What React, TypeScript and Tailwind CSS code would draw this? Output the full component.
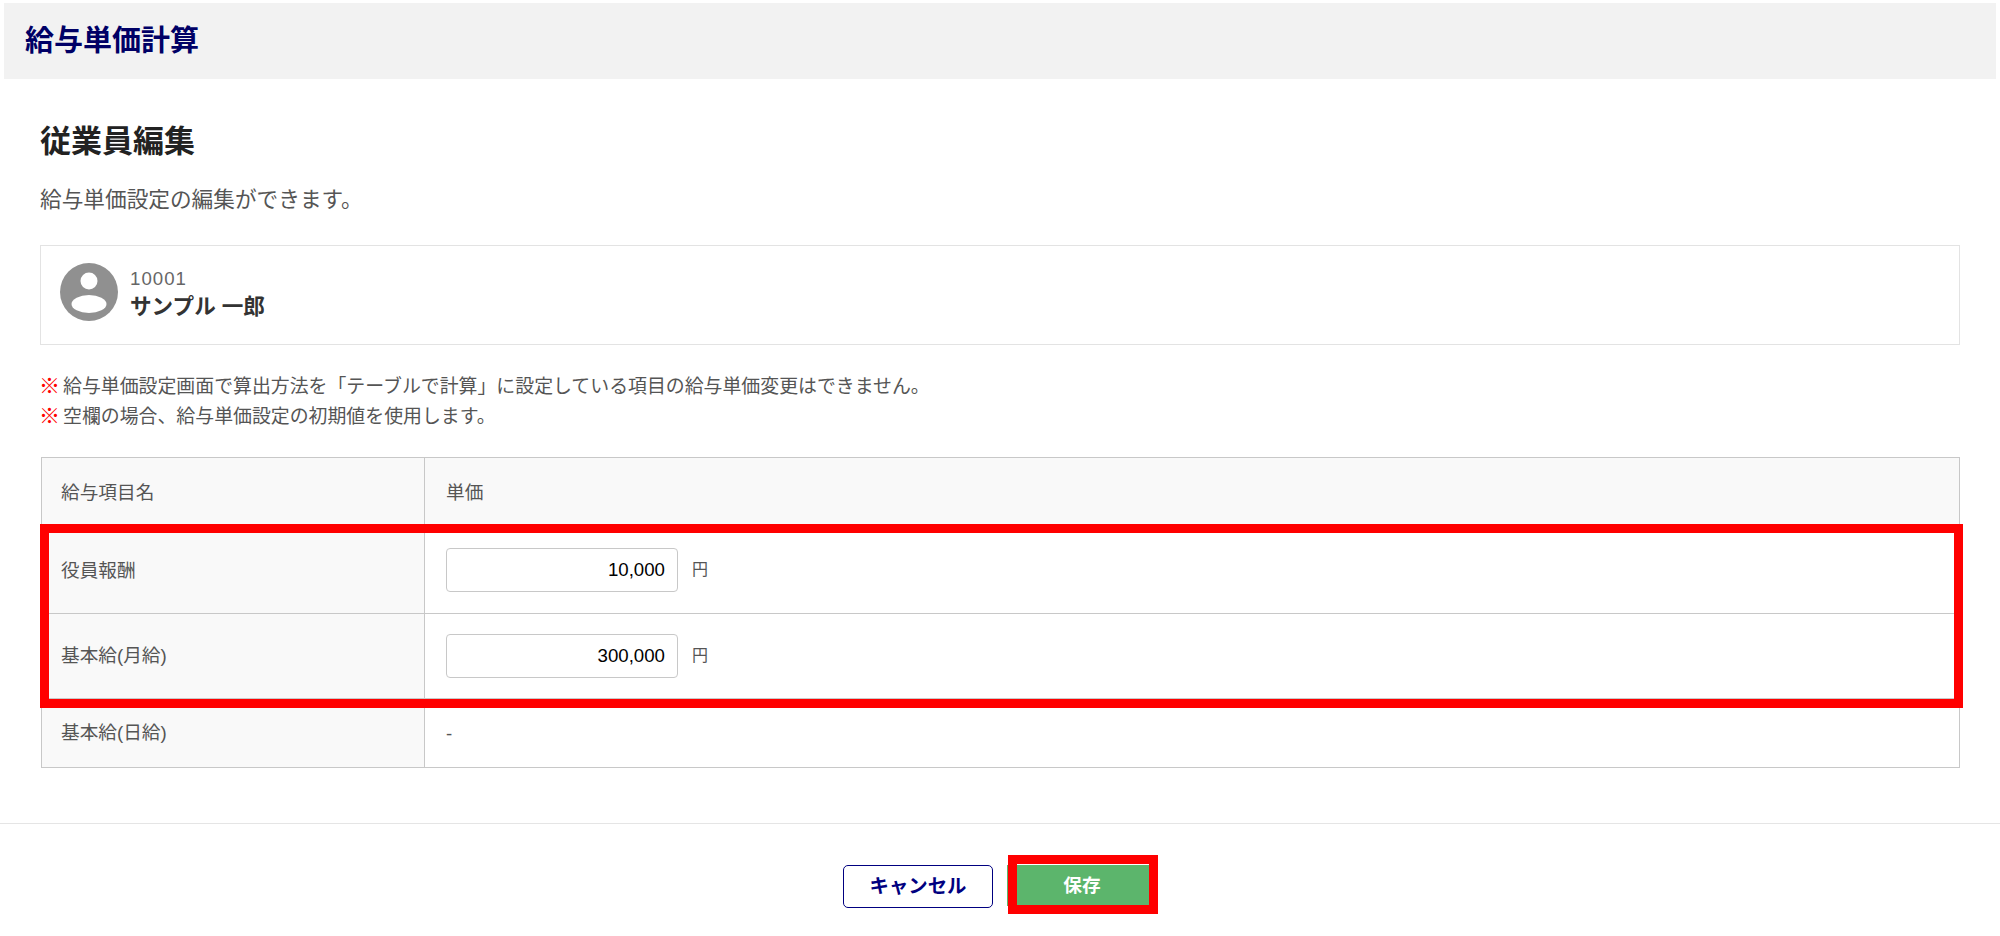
import React from "react";

const FONT = "font-['Liberation_Sans','Noto_Sans_CJK_JP',sans-serif]";

interface Row {
  name: string;
  value?: string;
  height: string;
  offset: string;
}

const rows: Row[] = [
  { name: "役員報酬", value: "10,000", height: "h-[85px]", offset: "mb-[2px]" },
  { name: "基本給(月給)", value: "300,000", height: "h-[85px]", offset: "" },
  { name: "基本給(日給)", height: "h-[69px]", offset: "pt-[2px]" },
];

const notes = [
  "給与単価設定画面で算出方法を「テーブルで計算」に設定している項目の給与単価変更はできません。",
  "空欄の場合、給与単価設定の初期値を使用します。",
];

const Avatar = () => (
  <svg width="58" height="58" viewBox="0 0 58 58" className="shrink-0">
    <circle cx="29" cy="29" r="29" fill="#909090" />
    <circle cx="29" cy="18" r="8.5" fill="#fff" />
    <ellipse cx="29" cy="41" rx="17.5" ry="9" fill="#fff" />
  </svg>
);

const App = () => {
  return (
    <div className={`${FONT} w-[2000px] h-[936px] bg-white pt-[3px] overflow-hidden`}>
      <header className="mx-[4px] h-[76px] bg-[#f2f2f2] flex items-center pl-[21px]">
        <h1 className="text-[29px] font-bold leading-none text-[#000066]">給与単価計算</h1>
      </header>

      <main className="px-[40px] pt-[46px]">
        <h2 className="text-[31px] font-bold leading-[34px] text-[#222]">従業員編集</h2>
        <p className="mt-[27px] text-[21.67px] leading-[28px] text-[#555]">給与単価設定の編集ができます。</p>

        <div className="mt-[31px] w-[1920px] h-[100px] border border-[#e3e3e3] flex items-start pl-[19px] pt-[17px] gap-[12px]">
          <Avatar />
          <div className="mt-[3px]">
            <div className="text-[18.67px] leading-[26px] tracking-[1px] text-[#666]">10001</div>
            <div className="text-[21.6px] leading-[30px] font-bold text-[#333]">サンプル 一郎</div>
          </div>
        </div>

        <div className="mt-[27px] text-[18.9px] leading-[30px] text-[#555]">
          {notes.map((note) => (
            <p key={note}>
              <span className="text-[#ff0000] font-bold text-[21px] leading-none -ml-px mr-[3px]">※</span>
              {note}
            </p>
          ))}
        </div>

        <div className="relative mt-[25px] w-[1920px]">
          <table className="w-[1919px] ml-px border-collapse text-[18.67px] text-[#555] table-fixed">
            <thead>
              <tr className="h-[71px]">
                <th className="w-[383px] border border-[#c8c8c8] bg-[#f9f9f9] pl-[19px] text-left font-normal">給与項目名</th>
                <th className="border border-[#c8c8c8] bg-[#f9f9f9] pl-[21px] text-left font-normal">単価</th>
              </tr>
            </thead>
            <tbody>
              {rows.map((row) => (
                <tr key={row.name} className={row.height}>
                  <td className="border border-[#c8c8c8] bg-[#f9f9f9] pl-[19px]">{row.name}</td>
                  <td className="border border-[#c8c8c8] pl-[21px]">
                    {row.value ? (
                      <div className={`flex items-center gap-[14px] ${row.offset}`}>
                        <input
                          readOnly
                          value={row.value}
                          className="w-[232px] h-[44px] rounded-[4px] border border-[#c8c8c8] bg-white pr-[12px] text-right text-black outline-none"
                        />
                        <span className="text-[16px]">円</span>
                      </div>
                    ) : (
                      <div className={row.offset}>-</div>
                    )}
                  </td>
                </tr>
              ))}
            </tbody>
          </table>
          <div className="absolute left-0 top-[67px] w-[1923px] h-[184px] border-[9px] border-[#ff0000] pointer-events-none" />
        </div>
      </main>

      <footer className="mt-[55px] border-t border-[#e5e5e5] flex justify-center gap-[14px] pt-[41px]">
        <button className="w-[150px] h-[43px] rounded-[5px] border border-[#000080] bg-white text-[19.4px] font-bold text-[#000080]">
          キャンセル
        </button>
        <div className="relative">
          <button className="w-[150px] h-[41px] bg-[#5cb56c] text-[18.67px] font-bold text-white">保存</button>
          <div className="absolute left-px -top-[10px] w-[150px] h-[59px] border-[9px] border-[#ff0000] pointer-events-none" />
        </div>
      </footer>
    </div>
  );
};

export default App;
